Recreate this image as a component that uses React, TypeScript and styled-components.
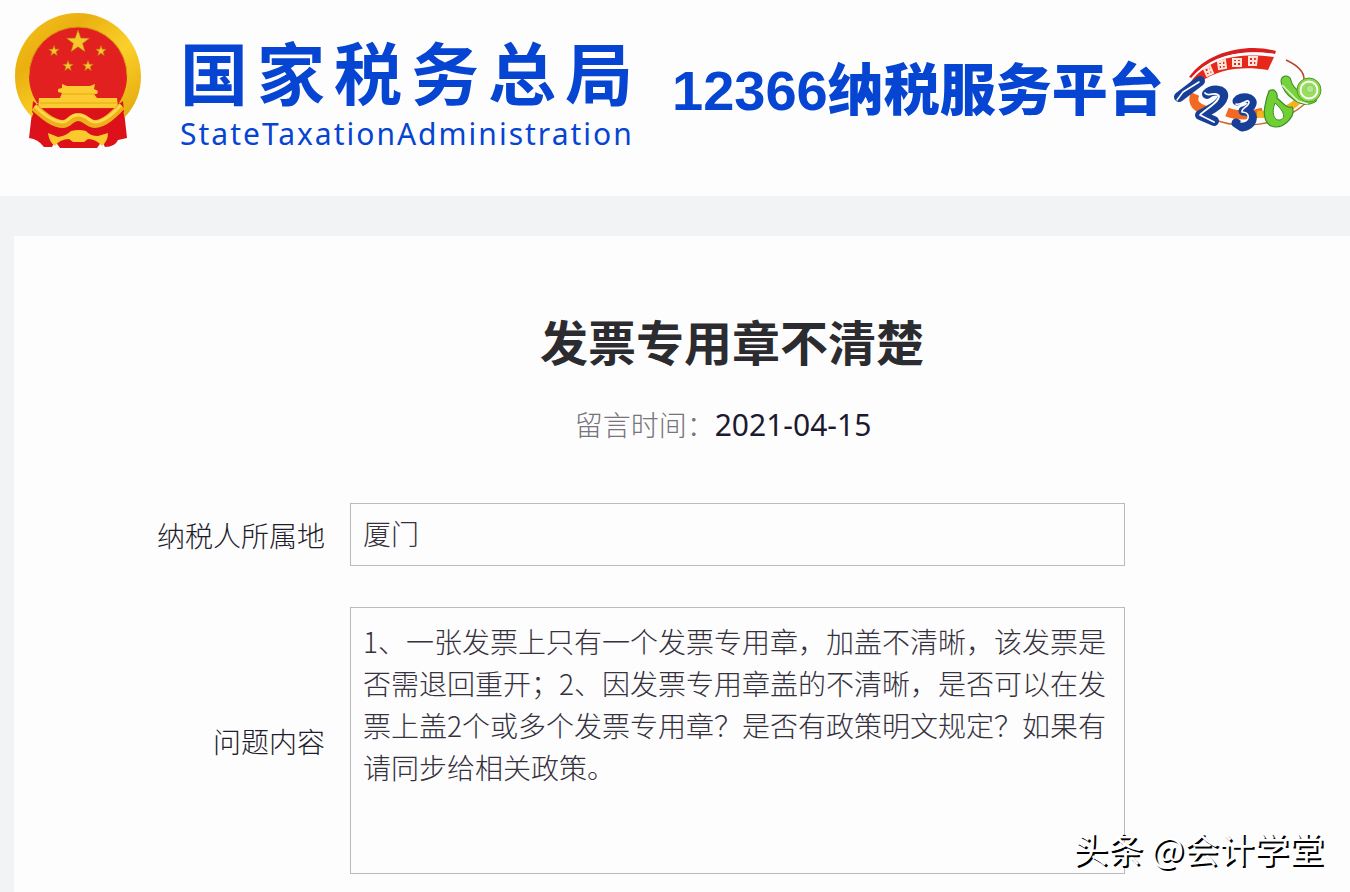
import React from "react";
import styled, { createGlobalStyle } from "styled-components";

const GlobalStyle = createGlobalStyle`
  *, *::before, *::after { box-sizing: border-box; }
  body {
    margin: 0;
    background: #f2f3f5;
    color: #1f1c2b;
    font-family: "Noto Sans CJK SC", "Noto Sans", sans-serif;
  }
`;

const Page = styled.div`
  position: relative;
  min-height: 100vh;
  display: flex;
  flex-direction: column;
`;

const Header = styled.header`
  display: flex;
  align-items: flex-start;
  height: 196px;
  padding: 12px 28px 0 14px;
  background: #fdfdfe;
  color: #0644d2;
`;

const Emblem = styled.svg`
  flex: none;
  width: 128px;
  height: 138px;
`;

const Agency = styled.div`
  flex: none;
  margin: 25px 0 0 38px;
`;

const AgencyName = styled.div`
  font-size: 68px;
  line-height: 68px;
  font-weight: 700;
  letter-spacing: 9px;
  white-space: nowrap;
`;

const AgencyEnglish = styled.div`
  margin-top: 9px;
  font-family: "Noto Sans", sans-serif;
  font-size: 30px;
  line-height: 40px;
  letter-spacing: 2px;
  white-space: nowrap;
`;

const Platform = styled.div`
  flex: none;
  display: flex;
  align-items: baseline;
  margin: 32px 0 0 30px;
  font-size: 56px;
  line-height: 84px;
  font-weight: 900;
  white-space: nowrap;
`;

const Hotline = styled.span`
  font-family: "Liberation Sans", sans-serif;
  font-weight: 700;
`;

const HotlineLogo = styled.svg`
  flex: none;
  width: 150px;
  height: 90px;
  margin: 34px 0 0 8px;
`;

const Panel = styled.main`
  flex: 1;
  margin: 40px 0 0 14px;
  padding: 68px 0 18px;
  background: #fdfdfe;
`;

const Heading = styled.div`
  padding-left: 100px;
  text-align: center;
`;

const Title = styled.h1`
  margin: 0;
  font-size: 48px;
  line-height: 72px;
  font-weight: 700;
  color: #2b2b30;
`;

const Posted = styled.p`
  display: flex;
  justify-content: center;
  align-items: baseline;
  margin: 27px 18px 0 0;
  font-size: 28px;
  line-height: 42px;
  font-weight: 300;
  color: #77747c;
`;

const PostedDate = styled.time`
  font-family: "Noto Sans", sans-serif;
  font-size: 30px;
  font-weight: 400;
  color: #1c1a30;
`;

const Form = styled.form`
  display: grid;
  grid-template-columns: 311px 1fr;
  gap: 41px 25px;
  align-items: center;
  margin-top: 57px;
  padding-right: 225px;
`;

const Label = styled.label`
  text-align: right;
  font-size: 28px;
  line-height: 42px;
  font-weight: 300;
`;

const fieldStyle = `
  display: block;
  width: 100%;
  margin: 0;
  border: 1px solid #b9bac2;
  border-radius: 0;
  background: transparent;
  color: #35313d;
  font-family: inherit;
  font-size: 28px;
  line-height: 42px;
  font-weight: 300;
  outline: none;
`;

const TextInput = styled.input`
  ${fieldStyle}
  height: 63px;
  padding: 0 12px 3px;
`;

const TextArea = styled.textarea`
  ${fieldStyle}
  height: 267px;
  padding: 12px;
  resize: none;
  overflow: hidden;
`;

const Watermark = styled.div`
  position: absolute;
  right: 26px;
  bottom: 20px;
  font-size: 35px;
  line-height: 48px;
  color: #ffffff;
  text-shadow: 2px 2px 0 #000000;
  white-space: nowrap;
`;

const star = (cx: number, cy: number, r: number) =>
  Array.from({ length: 10 }, (_, i) => {
    const radius = i % 2 ? r * 0.4 : r;
    const angle = (i * Math.PI) / 5 - Math.PI / 2;
    return `${(cx + radius * Math.cos(angle)).toFixed(2)},${(cy + radius * Math.sin(angle)).toFixed(2)}`;
  }).join(" ");

function NationalEmblem() {
  return (
    <Emblem viewBox="14 12 128 138" role="img" aria-label="国徽">
      <defs>
        <linearGradient id="gold" x1="0" y1="0" x2="1" y2="1">
          <stop offset="0" stopColor="#f9c21c" />
          <stop offset="0.3" stopColor="#e9b010" />
          <stop offset="0.6" stopColor="#fbd02a" />
          <stop offset="1" stopColor="#e2a70b" />
        </linearGradient>
      </defs>
      <path d="M33 104 L29 138 Q38 139 44 147 L52 147 L55 141 L60 148 H97 L102 141 L105 147 Q115 147 118 140 L127 138 L123 102Z" fill="#dc1119" />
      <path d="M78 13 C112 13 141 41 141 76 C141 92 136 105 125 117 L119 102 H37 L32 117 C20 105 15 92 15 76 C15 41 43 13 78 13Z" fill="url(#gold)" />
      <circle cx="78" cy="76" r="49" fill="#e32020" />
      <path d="M33 101 L43 109 H113 L123 101 L124 112 L104 132 H52 L32 112Z" fill="#dc1119" />
      <path d="M29 76a49 49 0 0 1 98 0" fill="none" stroke="#d79512" strokeWidth="1" />
      <g fill="#f6c72a" stroke="#b97a0e" strokeWidth="0.6">
        <polygon points={star(78, 42, 12)} />
        <polygon points={star(54, 51, 5.5)} />
        <polygon points={star(101, 51, 5.5)} />
        <polygon points={star(68, 66, 5.5)} />
        <polygon points={star(88, 66, 5.5)} />
      </g>
      <path d="M62 84 L67 86 H90 L95 84 L94 89 L98 91 L97 94 H94 L97 98 H117 L118 108 H38 L39 98 H60 L62 93 L58 92 V89 L62 88Z" fill="#fbcb31" />
      <path d="M62 94H95M40 103H116" stroke="#e5a913" strokeWidth="1" />
      <path d="M34 107 C43 115 53 124 63 124 C70 124 70 117 78 117 C86 117 88 124 95 124 C104 124 113 115 122 106" fill="none" stroke="#edb01a" strokeWidth="8" />
      <path d="M35 106 C45 116 55 122 63 122 C69 122 69 115 78 115 C87 115 89 122 95 122 C103 122 112 115 121 105" fill="none" stroke="#fdd74c" strokeWidth="3" />
      <path d="M48 133 L58 137 Q66 136 71 131 Q79 129 86 131 Q90 136 98 136 L108 133 Q108 141 102 146 Q96 139 88 139 L84 142 H73 L69 139 Q60 139 55 146 Q49 142 48 133Z" fill="#fbc92e" />
    </Emblem>
  );
}

function Logo12366() {
  return (
    <HotlineLogo viewBox="1171 46 150 90" role="img" aria-label="12366">
      <path d="M1194 94 C1190 104 1197 108 1204 110 M1226 112 C1236 116 1250 116 1262 112" fill="none" stroke="#f26a21" strokeWidth="9" />
      <path d="M1256 114 C1272 116 1288 110 1297 101" fill="none" stroke="#f2b31c" strokeWidth="7" />
      <path d="M1212 119 C1238 130 1278 127 1305 103" fill="none" stroke="#c96a2a" strokeWidth="1.5" />
      <path d="M1188 77 C1207 50 1249 43 1275 51 L1274 54 C1242 49 1213 55 1191 78Z" fill="#d91f1e" />
      <path d="M1187 86 C1206 55 1243 53 1273 57 L1267 70 C1241 66 1217 69 1200 82Z" fill="#e5281a" />
      <path d="M1191 78 C1211 55 1242 50 1274 55" fill="none" stroke="#ffffff" strokeWidth="1.5" />
      <g fill="none" stroke="#ffe5dc" strokeWidth="2">
        <path d="M1203 69l6 -3l3 7l-6 3zM1204 73l6-3M1207 67l2 8" />
        <path d="M1217 62l7-2l1 8l-7 1zM1217 65h7M1221 61v7" />
        <path d="M1232 59h8v7h-8zM1232 62h8M1236 58v8" />
        <path d="M1248 57h8l-1 8h-7zM1248 61h8M1252 57v8" />
      </g>
      <path d="M1285 60 C1298 66 1303 73 1303 79" fill="none" stroke="#b94324" strokeWidth="1.5" />
      <g fill="none" strokeLinecap="round" strokeLinejoin="round">
        <path d="M1199 81 L1178 97" stroke="#173f98" strokeWidth="10" />
        <path d="M1198 82 L1182 92 L1176 100" stroke="#ffffff" strokeWidth="1.5" />
        <path d="M1206 94 C1211 89 1224 89 1222 97 C1220 105 1207 111 1199 115 L1213 121" stroke="#173f98" strokeWidth="10" />
        <path d="M1204 93 C1208 98 1215 90 1218 96 C1218 103 1203 110 1199 115 L1213 122" stroke="#ffffff" strokeWidth="1.8" />
        <path d="M1236 101 C1240 95 1253 98 1251 104 C1250 108 1245 110 1242 111 C1256 111 1253 126 1241 127 L1235 123" stroke="#173f98" strokeWidth="9" />
        <path d="M1235 104 C1240 106 1247 98 1248 102 C1248 107 1240 108 1241 112 C1249 112 1250 121 1240 122" stroke="#ffffff" strokeWidth="1.6" />
        <path d="M1285 81 C1287 92 1302 103 1311 98" stroke="#3c8b26" strokeWidth="11" />
        <path d="M1285 81 C1287 92 1302 103 1311 98" stroke="#78d23b" strokeWidth="9" />
      </g>
      <path d="M1268 91 C1273 88 1277 92 1276 98 C1282 103 1286 109 1291 107 C1295 114 1286 127 1274 127 C1264 126 1262 115 1264 106 C1265 100 1266 96 1268 91Z" fill="#70cf34" stroke="#3c8b26" strokeWidth="1.2" />
      <path d="M1274 103 C1270 113 1273 121 1279 120 C1286 118 1282 110 1274 103Z" fill="#ffffff" stroke="#439527" />
      <path d="M1281 85 L1297 101 L1307 104" fill="none" stroke="#e5f5d5" strokeWidth="1.5" />
      <circle cx="1308" cy="90" r="12" fill="#8bd848" stroke="#4d9b2c" />
      <circle cx="1308" cy="90" r="8.5" fill="#9bde5d" stroke="#ffffff" strokeWidth="1.8" />
      <circle cx="1309" cy="89" r="4" fill="#b4e78c" stroke="#86cd5c" />
    </HotlineLogo>
  );
}

export default function App() {
  return (
    <>
      <GlobalStyle />
      <Page>
        <Header>
          <NationalEmblem />
          <Agency>
            <AgencyName>国家税务总局</AgencyName>
            <AgencyEnglish lang="en">StateTaxationAdministration</AgencyEnglish>
          </Agency>
          <Platform>
            <Hotline>12366</Hotline>
            <span>纳税服务平台</span>
          </Platform>
          <Logo12366 />
        </Header>
        <Panel>
          <Heading>
            <Title>发票专用章不清楚</Title>
            <Posted>
              留言时间：<PostedDate dateTime="2021-04-15">2021-04-15</PostedDate>
            </Posted>
          </Heading>
          <Form>
            <Label htmlFor="region">纳税人所属地</Label>
            <TextInput id="region" defaultValue="厦门" readOnly />
            <Label htmlFor="question">问题内容</Label>
            <TextArea
              id="question"
              readOnly
              defaultValue="1、一张发票上只有一个发票专用章，加盖不清晰，该发票是否需退回重开；2、因发票专用章盖的不清晰，是否可以在发票上盖2个或多个发票专用章？是否有政策明文规定？如果有请同步给相关政策。"
            />
          </Form>
        </Panel>
        <Watermark>头条 @会计学堂</Watermark>
      </Page>
    </>
  );
}
